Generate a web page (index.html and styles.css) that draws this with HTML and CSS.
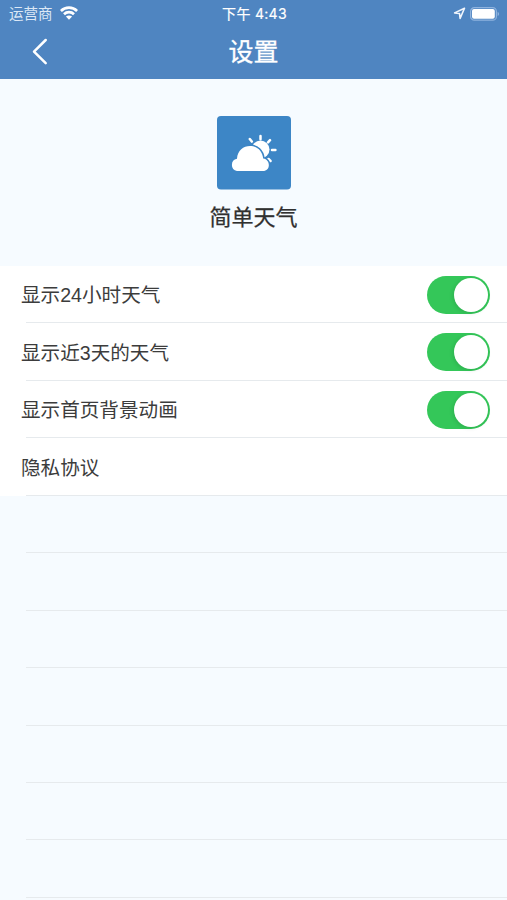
FILE: index.html
```html
<!DOCTYPE html>
<html lang="zh-CN">
<head>
<meta charset="utf-8">
<title>设置</title>
<link rel="stylesheet" href="styles.css">
</head>
<body>
<header class="header">
  <div class="status">
    <div class="status-left">
      <span class="carrier">运营商</span>
      <svg class="wifi" width="18" height="14" viewBox="0 0 18 14" fill="none" stroke="#fff" stroke-width="2.7">
        <path d="M.9 4.9C5.4.6 12.6.6 17.1 4.9"/>
        <path d="M4 8.2c2.8-2.7 7.2-2.7 10 0"/>
        <path d="M9 13.7 5.9 10.6c1.8-1.6 4.4-1.6 6.2 0z" fill="#fff" stroke="none"/>
      </svg>
    </div>
    <span class="time">下午 4:43</span>
    <div class="status-right">
      <svg width="13" height="13" viewBox="0 0 13 13" fill="none" stroke="#f0f5fc" stroke-width="1.6" stroke-linejoin="round">
        <path d="M11.5 1.2 1.6 5.9l4.9.6.6 4.9z"/>
      </svg>
      <svg width="30" height="14" viewBox="0 0 30 14">
        <rect x=".6" y=".6" width="25.8" height="12.6" rx="3.8" fill="none" stroke="#8fb3de" stroke-width="1.2"/>
        <rect x="2" y="2.1" width="22.8" height="9.6" rx="2" fill="#fff"/>
        <path d="M27.6 4.7c2 .8 2 3.6 0 4.4z" fill="#8fb3de"/>
      </svg>
    </div>
  </div>
  <nav class="nav">
    <svg class="back" width="18" height="28" viewBox="0 0 18 28" fill="none" stroke="#fff" stroke-width="2.5" stroke-linecap="round" stroke-linejoin="round">
      <path d="M14.7 2 3 13.6l11.7 11.6"/>
    </svg>
    <h1 class="title">设置</h1>
  </nav>
</header>
<section class="about">
  <svg class="app-icon" width="74" height="74" viewBox="0 0 74 74">
    <rect width="74" height="73.5" rx="4" fill="#3d86c6"/>
    <circle cx="43.5" cy="33.5" r="9" fill="#fff"/>
    <g stroke="#fff" stroke-width="2.5" stroke-linecap="round">
      <path d="M43.5 20v3.2M32.8 23l2 2.6M53 24.2l-2 2.2M55 34h3.4M51.5 43l2 2"/>
    </g>
    <path d="M20 55A6.2 6.2 0 0 1 20 42.8C20.5 34.5 26.5 30 33 30c7 0 12.4 5 13.2 12.6 7.6 1.2 7.6 12.4-.4 12.4z" fill="#fff" stroke="#3d86c6" stroke-width="3.2" paint-order="stroke"/>
  </svg>
  <h2 class="app-name">简单天气</h2>
</section>
<main class="list">
  <div class="row filled"><span class="label">显示24小时天气</span><span class="toggle"></span></div>
  <div class="row filled"><span class="label">显示近3天的天气</span><span class="toggle"></span></div>
  <div class="row filled"><span class="label">显示首页背景动画</span><span class="toggle"></span></div>
  <div class="row filled"><span class="label">隐私协议</span></div>
  <div class="row"></div>
  <div class="row"></div>
  <div class="row"></div>
  <div class="row"></div>
  <div class="row"></div>
  <div class="row"></div>
  <div class="row"></div>
</main>
</body>
</html>
```
FILE: styles.css
```css
* { box-sizing: border-box; }
body {
  margin: 0;
  height: 900px;
  overflow: hidden;
  background: #f6fbff;
  color: #3c3c3c;
  font-family: Inter, "Noto Sans CJK SC", sans-serif;
}
.header {
  height: 79px;
  background: #4f85c1;
  color: #fff;
}
.status {
  display: grid;
  grid-template-columns: 1fr auto 1fr;
  align-items: center;
  height: 27px;
  padding: 0 7px 0 9px;
  font-size: 14.5px;
  line-height: 27px;
}
.status-left, .status-right {
  display: flex;
  align-items: center;
}
.status-left { gap: 7px; }
.carrier { color: #dce8f6; }
.wifi { margin-top: -1px; }
.time {
  font-size: 14px;
  font-weight: 400;
  -webkit-text-stroke: .2px;
  letter-spacing: .3px;
}
.status-right {
  justify-content: flex-end;
  gap: 4px;
}
.nav {
  display: grid;
  grid-template-columns: 1fr auto 1fr;
  align-items: center;
  height: 50px;
}
.back { margin-left: 31px; }
.title {
  margin: 0;
  font-size: 25px;
  font-weight: 400;
  -webkit-text-stroke: .3px;
  line-height: 50px;
}
.about {
  display: flex;
  flex-direction: column;
  align-items: center;
  height: 187px;
  padding-top: 36.5px;
}
.app-icon { flex: none; }
.app-name {
  margin: 11.5px 0 0;
  font-size: 22px;
  font-weight: 400;
  -webkit-text-stroke: .25px;
  line-height: 32px;
  color: #303030;
}
.row {
  display: flex;
  align-items: center;
  justify-content: space-between;
  height: 57.45px;
  padding: 0 17px 0 21px;
  font-family: "Liberation Sans", "Noto Sans CJK SC", sans-serif;
  font-size: 19.6px;
  background: linear-gradient(#e6eaed, #e6eaed) 26px 100% / 100% 1px no-repeat;
}
.filled { background-color: #fff; }
.label { padding-bottom: 2px; }
.toggle {
  display: flex;
  justify-content: flex-end;
  width: 63px;
  height: 38px;
  padding: 2px;
  border-radius: 19px;
  background: #34c759;
}
.toggle::before {
  content: "";
  width: 34px;
  height: 34px;
  border-radius: 50%;
  background: #fff;
  box-shadow: -1px 1px 4px rgba(0, 0, 0, .12);
}
```
